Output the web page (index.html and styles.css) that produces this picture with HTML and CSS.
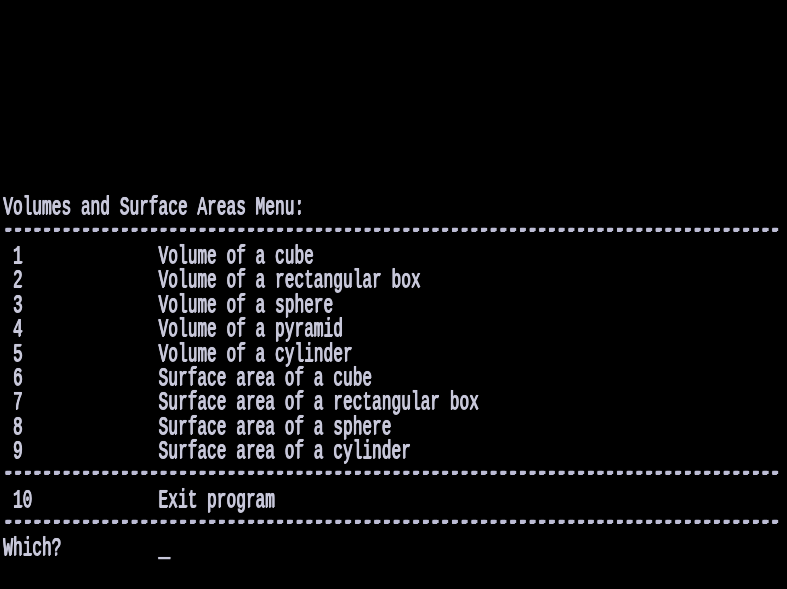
FILE: index.html
```html
<!DOCTYPE html>
<html>
<head>
<meta charset="utf-8">
<link rel="stylesheet" href="styles.css">
<title>Volumes and Surface Areas Menu</title>
</head>
<body>
<div class="screen">
  <pre class="term">








Volumes and Surface Areas Menu:
<span class="rule">--------------------------------------------------------------------------------</span>
 1              Volume of a cube
 2              Volume of a rectangular box
 3              Volume of a sphere
 4              Volume of a pyramid
 5              Volume of a cylinder
 6              Surface area of a cube
 7              Surface area of a rectangular box
 8              Surface area of a sphere
 9              Surface area of a cylinder
<span class="rule">--------------------------------------------------------------------------------</span>
 10             Exit program
<span class="rule">--------------------------------------------------------------------------------</span>
Which?          <span class="cursor">_</span></pre>
</div>
</body>
</html>
```

FILE: styles.css
```css
html, body {
  margin: 0;
  padding: 0;
  background: #000;
  overflow: hidden;
}
.screen {
  width: 787px;
  height: 589px;
  background: #000;
  overflow: hidden;
  padding-left: 3px;
  box-sizing: border-box;
}
.term {
  margin: 0;
  padding-top: 1.5px;
  font-family: "Liberation Mono", "DejaVu Sans Mono", monospace;
  font-weight: normal;
  font-size: 25px;
  line-height: 24.36px;
  color: #c8c8da;
  white-space: pre;
  transform: scaleX(0.647);
  transform-origin: 0 0;
  text-shadow: 1.1px 0 0 #c8c8da, 0 0.5px 0 #c8c8da, 0 0 1px rgba(190, 190, 225, 0.6);
}
.rule {
  position: relative;
  top: -3px;
  font-weight: bold;
  color: #bcbcd4;
  text-shadow: 2px 0 0 #bcbcd4, 0 0.8px 0 #bcbcd4, 0 0 1px rgba(190, 190, 225, 0.6);
}
.cursor {
  display: inline-block;
  font-weight: bold;
  transform: scaleX(1.25);
  transform-origin: 0 0;
  text-shadow: 0 1px 0 #c8c8da, 0 0 1px rgba(190, 190, 225, 0.6);
}
```
